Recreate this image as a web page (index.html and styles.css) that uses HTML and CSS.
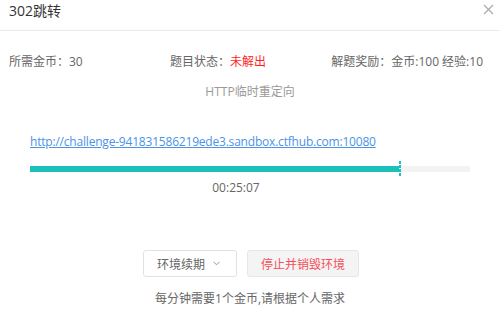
FILE: index.html
```html
<!DOCTYPE html>
<html lang="zh-CN">
<head>
  <meta charset="UTF-8" />
  <meta name="viewport" content="width=device-width, initial-scale=1.0"/>
  <title>302跳转</title>
  <link rel="stylesheet" href="styles.css">
</head>
<body>

  <!-- Dialog header -->
  <header class="dlg-header">
    <h1 class="dlg-title">302跳转</h1>
    <button class="dlg-close" aria-label="关闭">
      <svg width="11" height="11" viewBox="0 0 11 11">
        <path d="M1 1 L10 10 M10 1 L1 10" stroke="#aaa" stroke-width="1.2" fill="none"/>
      </svg>
    </button>
  </header>

  <!-- Challenge info -->
  <div class="info-row">
    <span>所需金币：30</span>
    <span>题目状态：<em class="unsolved">未解出</em></span>
    <span>解题奖励：金币:100 经验:10</span>
  </div>
  <p class="subtitle">HTTP临时重定向</p>

  <div class="env">
    <a class="env-link" href="#">http://challenge-941831586219ede3.sandbox.ctfhub.com:10080</a>
    <div class="progress">
      <div class="progress-fill" style="width: 83.9%;">
        <span class="progress-mark"></span>
      </div>
    </div>
    <div class="timer">00:25:07</div>
  </div>

  <div class="actions">
    <button class="btn">环境续期
      <svg class="chev" width="7" height="5" viewBox="0 0 7 5">
        <path d="M0.5 0.8 L3.5 3.8 L6.5 0.8" stroke="#999" stroke-width="1" fill="none"/>
      </svg>
    </button>
    <button class="btn btn-danger">停止并销毁环境</button>
  </div>
  <p class="note">每分钟需要1个金币,请根据个人需求</p>

</body>
</html>
```

FILE: styles.css
```css
body {
  font-family: 'Open Sans', 'Noto Sans CJK SC', sans-serif;
  margin: 0;
  padding: 0;
  background-color: #fff;
  color: #666;
  font-size: 12px;
}

.dlg-header {
  display: flex;
  justify-content: space-between;
  align-items: flex-start;
  height: 31px;
  padding: 2px 6px 0 9px;
  box-sizing: border-box;
  border-bottom: 1px solid #ebebeb;
}

.dlg-title {
  margin: 0;
  font-size: 14px;
  font-weight: normal;
  line-height: 18px;
  color: #333;
}

.dlg-close {
  border: none;
  background: none;
  padding: 2px 0 0;
  cursor: pointer;
  line-height: 0;
}

.info-row {
  display: grid;
  grid-template-columns: 161px 1fr auto;
  padding: 0 17px 0 9px;
  margin-top: 22px;
  line-height: 18px;
}

.unsolved {
  font-style: normal;
  color: #ff1f1f;
}

.subtitle {
  margin: 12px 0 0;
  text-align: center;
  color: #999;
  line-height: 18px;
}

.env {
  padding: 0 30px;
  margin-top: 32px;
}

.env-link {
  display: inline-block;
  color: #4a93e6;
  text-decoration: underline;
  letter-spacing: -0.2px;
  line-height: 18px;
}

.progress {
  height: 6px;
  margin-top: 15px;
  background-color: #f3f3f3;
}

.progress-fill {
  position: relative;
  height: 100%;
  background-color: #1bc1b8;
}

.progress-mark {
  position: absolute;
  right: -2px;
  top: -5px;
  width: 2px;
  height: 16px;
  background: repeating-linear-gradient(#1bc1b8 0 3px, transparent 3px 4px);
}

.timer {
  width: 412px;
  text-align: center;
  margin-top: 7px;
  line-height: 18px;
}

.actions {
  display: flex;
  justify-content: center;
  gap: 10px;
  margin-top: 53px;
  padding-left: 2px;
}

.btn {
  display: flex;
  align-items: center;
  height: 27px;
  padding: 0 13px;
  font-family: inherit;
  font-size: 12px;
  color: #666;
  background-color: #fff;
  border: 1px solid #e2e2e2;
  border-radius: 3px;
  cursor: pointer;
}

.chev {
  margin: 0 3px 0 8px;
}

.btn-danger {
  color: #f5505a;
  background-color: #f4f4f4;
  border-color: #e6e6e6;
}

.note {
  margin: 13px 0 0;
  text-align: center;
  line-height: 18px;
}
```
